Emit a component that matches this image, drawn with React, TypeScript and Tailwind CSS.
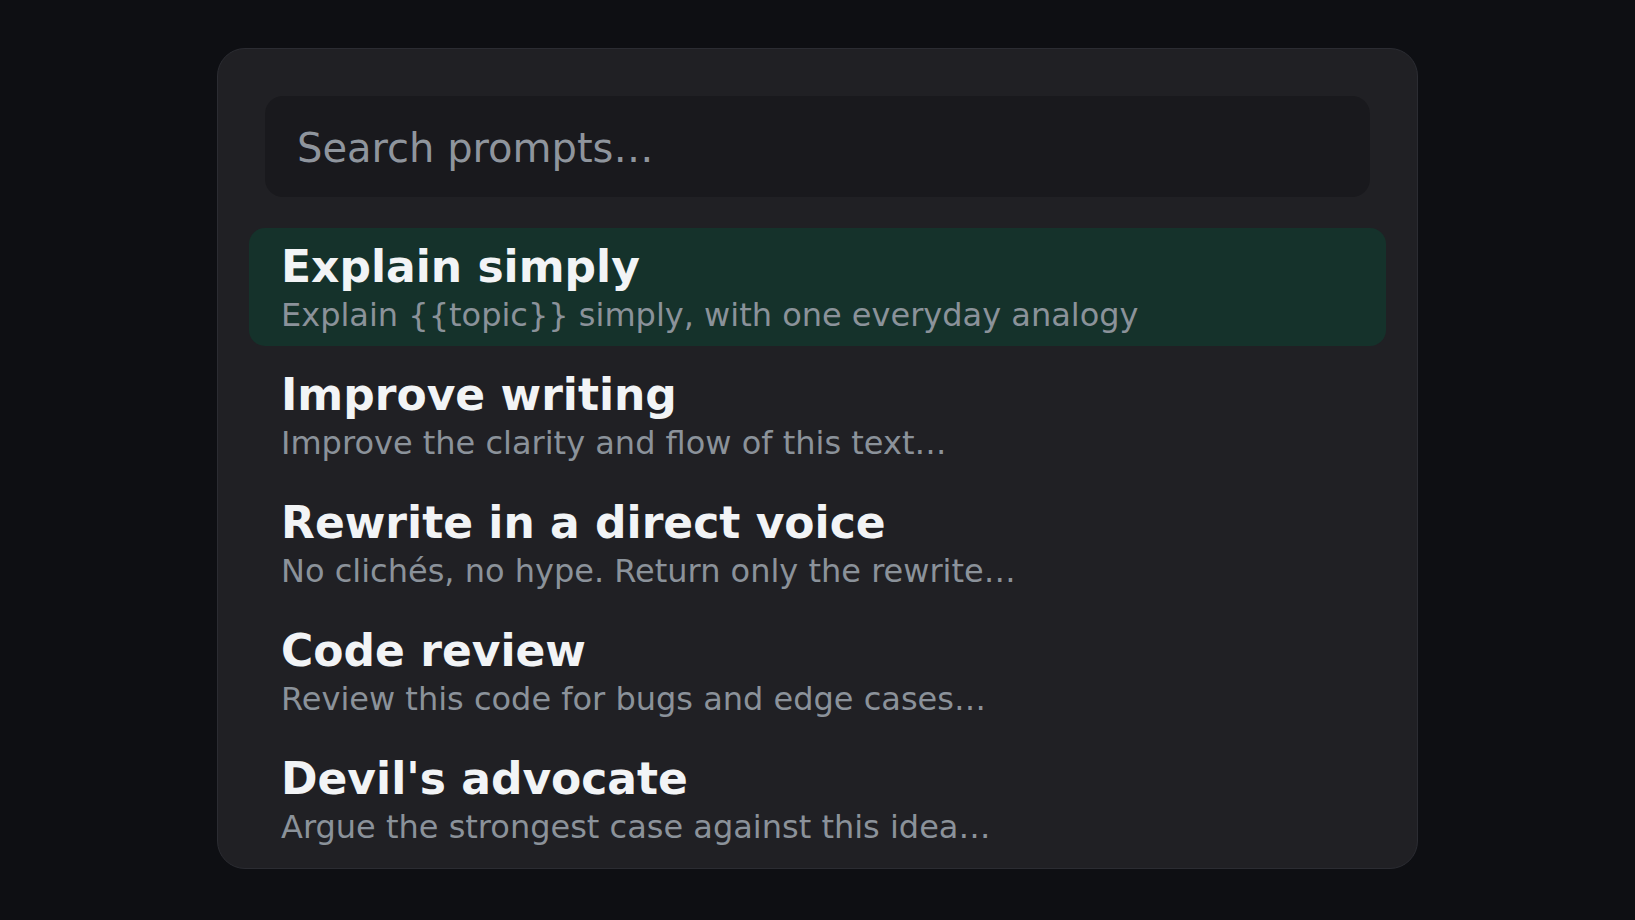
import React, { useState } from 'react';

type Prompt = {
  id: string;
  title: string;
  body: string;
};

const prompts: Prompt[] = [
  { id: 'explain', title: 'Explain simply', body: 'Explain {{topic}} simply, with one everyday analogy' },
  { id: 'improve', title: 'Improve writing', body: 'Improve the clarity and flow of this text…' },
  { id: 'rewrite', title: 'Rewrite in a direct voice', body: 'No clichés, no hype. Return only the rewrite…' },
  { id: 'review', title: 'Code review', body: 'Review this code for bugs and edge cases…' },
  { id: 'devil', title: "Devil's advocate", body: 'Argue the strongest case against this idea…' },
];

const App: React.FC = () => {
  const [query, setQuery] = useState('');
  const [active, setActive] = useState('explain');

  const visible = prompts.filter(
    (p) =>
      p.title.toLowerCase().includes(query.toLowerCase()) ||
      p.body.toLowerCase().includes(query.toLowerCase())
  );

  return (
    <div
      className="min-h-screen bg-[#0e0f13] pl-[217px] pt-[48px]"
      style={{ fontFamily: '"DejaVu Sans", Verdana, sans-serif' }}
    >
      <div className="w-[1201px] h-[821px] overflow-hidden rounded-[28px] border border-[#2b2c32] bg-[#202024] px-[31px] pt-[47px]">
        {/* search box */}
        <div className="mx-4">
          <input
            value={query}
            onChange={(e) => setQuery(e.target.value)}
            placeholder="Search prompts…"
            className="h-[101px] w-full rounded-[18px] bg-[#19191d] pl-[32px] pt-[2px] text-[40px] text-[#e5e7eb] placeholder:text-[#8f959d] outline-none"
          />
        </div>

        {/* prompt list */}
        <div className="mt-[31px] flex flex-col gap-[10px]">
          {visible.map((p) => (
            <div
              key={p.id}
              onClick={() => setActive(p.id)}
              className={`cursor-pointer rounded-2xl px-[32px] pt-[13px] pb-[9px] ${
                active === p.id ? 'bg-[#15322b]' : ''
              }`}
            >
              <div className="text-[44px] font-bold leading-[1.2] text-[#f2f4f6]">{p.title}</div>
              <div className="mt-[1.5px] text-[32px] leading-[1.3] text-[#8b929a]">{p.body}</div>
            </div>
          ))}
        </div>
      </div>
    </div>
  );
};

export default App;
